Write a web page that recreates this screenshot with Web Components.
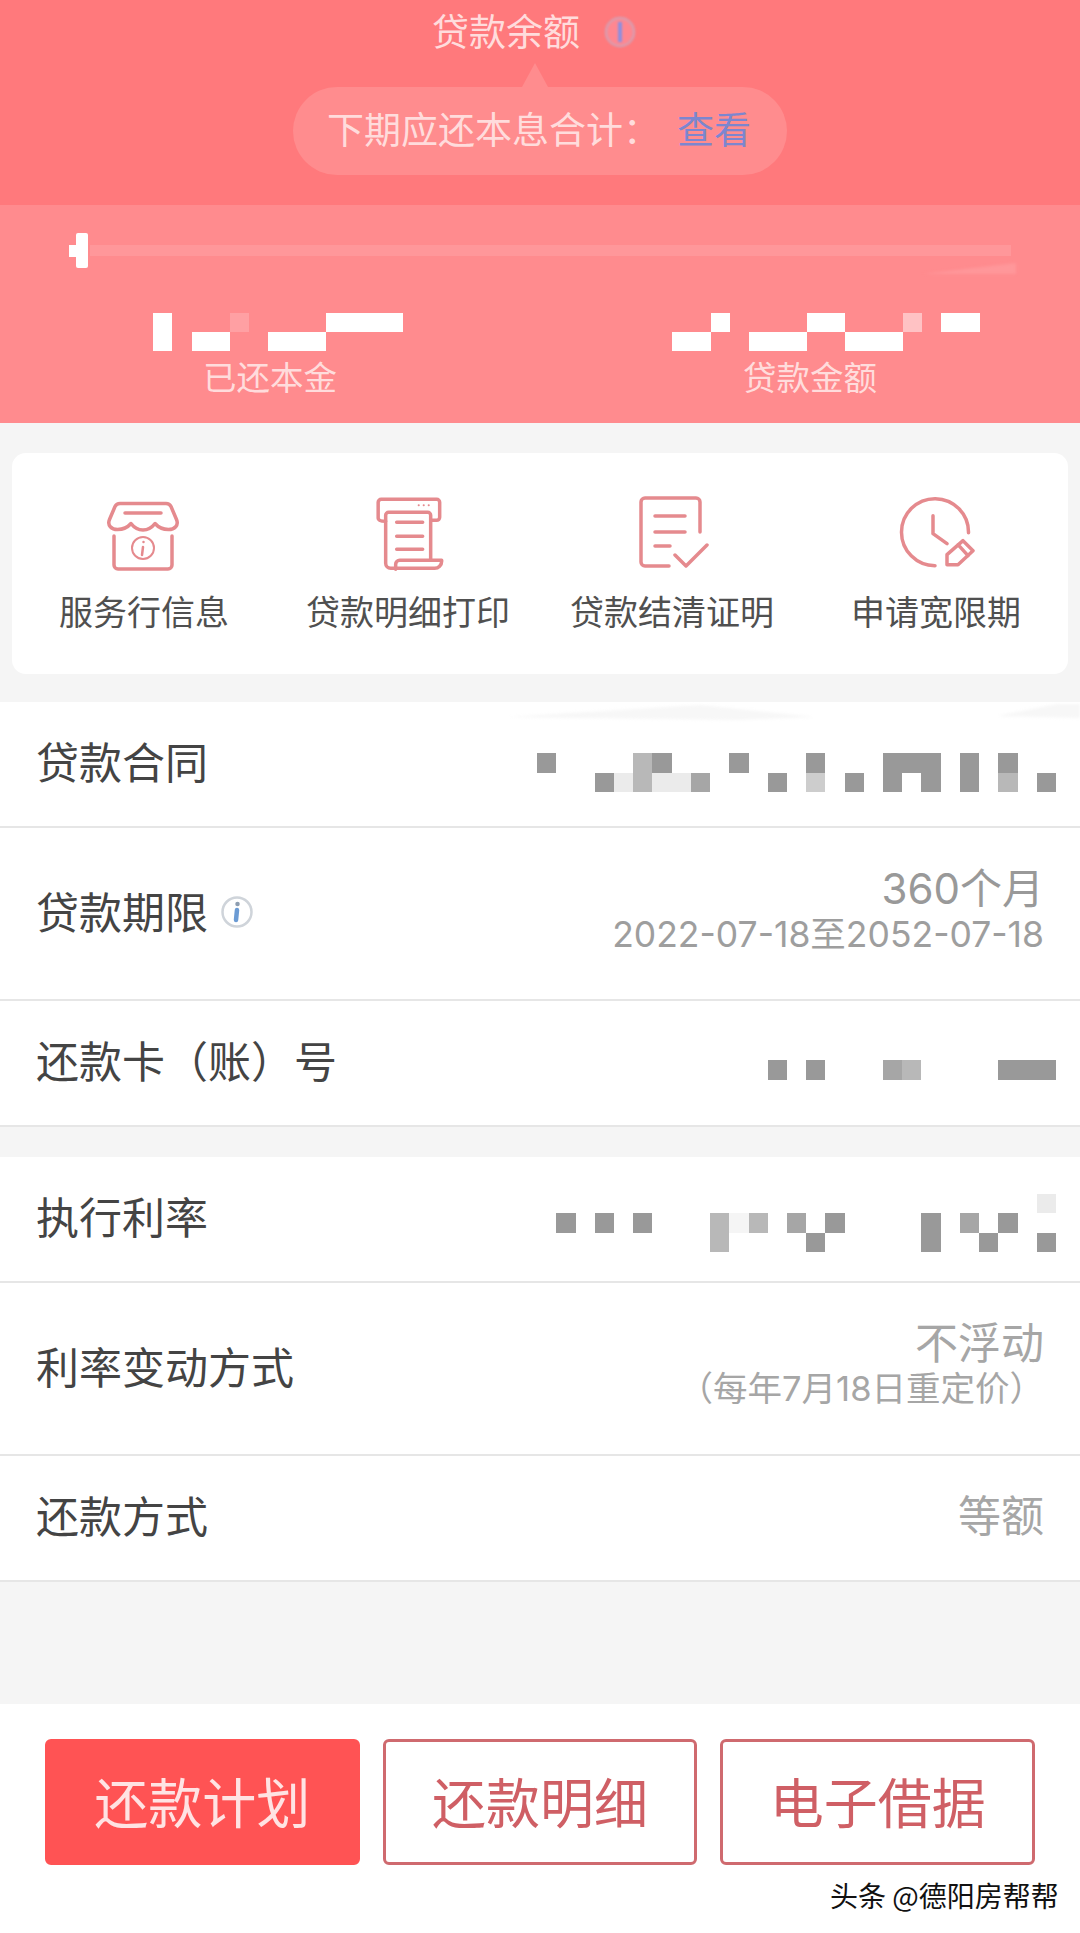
<!DOCTYPE html>
<html lang="zh-CN"><head><meta charset="utf-8"><title>贷款详情</title>
<style>
html,body{margin:0;padding:0;background:#f5f5f5}
body{width:1080px;height:1933px;overflow:hidden;font-family:"Noto Sans CJK SC","Noto Sans",sans-serif;color:#444}
.num{font-family:Inter,"Noto Sans CJK SC",sans-serif;display:block;white-space:nowrap}
</style></head><body>
<loan-hero></loan-hero>
<loan-shortcuts>
  <loan-shortcut label="服务行信息" icon="store"></loan-shortcut>
  <loan-shortcut label="贷款明细打印" icon="print"></loan-shortcut>
  <loan-shortcut label="贷款结清证明" icon="doc"></loan-shortcut>
  <loan-shortcut label="申请宽限期" icon="clock"></loan-shortcut>
</loan-shortcuts>
<loan-group>
  <loan-row smudge label="贷款合同"><pixel-block style="margin-top:17px" rows="d....md...d...d...ddd.d.d..|...dwmwwa...d.l.d.d.d.d.m.d"></pixel-block></loan-row>
  <loan-row tall label="贷款期限" info><span class="num" style="font-size:42px;color:#999;line-height:46px">360个月</span><span class="num" style="font-size:35.500px;color:#9e9e9e;line-height:46px;margin-bottom:4px">2022-07-18至2052-07-18</span></loan-row>
  <loan-row label="还款卡（账）号"><pixel-block style="margin-top:14px" rows="............d.d...am....ddd"></pixel-block></loan-row>
</loan-group>
<loan-group style="margin-top:30px">
  <loan-row label="执行利率"><pixel-block style="margin-top:8px" rows="..........................w|.d.d.d...mfm.a.d....d.a.d..|.........m....d.....d..d..d"></pixel-block></loan-row>
  <loan-row tall label="利率变动方式"><span class="num" style="font-size:43px;color:#a6a6a6;line-height:46px">不浮动</span><span class="num" style="font-size:34.500px;color:#a6a6a6;line-height:46px;margin:0 0 6px 0">（每年7月18日重定价）</span></loan-row>
  <loan-row label="还款方式"><span class="num" style="font-size:43px;color:#a6a6a6;margin-bottom:10px">等额</span></loan-row>
</loan-group>
<loan-actions>
  <loan-button primary>还款计划</loan-button>
  <loan-button>还款明细</loan-button>
  <loan-button>电子借据</loan-button>
</loan-actions>
<script>
const colors={d:'#999',a:'#a6a6a6',m:'#b8b8b8',l:'#cdcdcd',w:'#ebebeb',f:'#f5f5f5',W:'#fff',p:'#ffc2c4',q:'#ffa0a3'};
function shadow(el,html){el.attachShadow({mode:'open'}).innerHTML=html;return el.shadowRoot;}
class PixelBlock extends HTMLElement{
  connectedCallback(){
    if(this.shadowRoot)return;
    const rows=this.getAttribute('rows').split('|');
    const n=Math.max(...rows.map(r=>r.length));
    let cells='';
    rows.forEach(r=>{for(let i=0;i<n;i++){const c=r[i]||'.';cells+=`<i style="background:${colors[c]||'transparent'}"></i>`}});
    shadow(this,`<style>:host{display:block}div{display:grid;grid-template-columns:repeat(${n},19.22px);grid-auto-rows:19.2px}i{display:block}</style><div>${cells}</div>`);
  }
}
customElements.define('pixel-block',PixelBlock);
class LoanHero extends HTMLElement{
  connectedCallback(){
    shadow(this,`<style>
:host{display:block;color:#ffdcdc}
.top{height:205px;background:#ff797c;display:flex;flex-direction:column;align-items:center}
.title{display:flex;align-items:center;height:60px;font-size:37px;line-height:60px;gap:23px;margin-left:-11px}
.title svg{display:block;filter:blur(1px);margin-top:4px}
.bubble{position:relative;margin-top:27px;height:88px;width:494px;border-radius:44px;background:#ff8c8e;display:flex;align-items:center;font-size:37px;box-sizing:border-box;padding:0 0 7px 34px}
.bubble::before{content:"";position:absolute;left:229px;top:-24px;border:solid transparent;border-width:0 13px 24px;border-bottom-color:#ff8c8e}
.bubble b{font-weight:400;color:#7c86cf;margin-left:17px}
.lab{white-space:nowrap}
.low{height:218px;background:#ff8b8e;position:relative}
.bar{display:flex;align-items:center;height:35px;padding:28px 0 0 69px}
.notch{width:7px;height:12px;background:#fff}
.thumb{width:12px;height:35px;background:#fff;border-radius:2px}
.track{width:921px;height:11px;background:#ff979a;margin-left:2px;filter:blur(.6px)}
.streak{position:absolute;left:920px;top:55px;filter:blur(1.5px)}
.cols{display:grid;grid-template-columns:1fr 1fr;margin-top:45px}
.col{display:flex;flex-direction:column;align-items:center}
.col div{font-size:33.500px;line-height:40px;margin-top:5px}
</style>
<div class="top"><div class="title"><span>贷款余额</span>
<svg width="34" height="34" viewBox="0 0 34 34"><circle cx="17" cy="17" r="14" fill="#ff8790" stroke="#d99cae" stroke-width="2.500"/><path d="M17 7v20" stroke="#8c8fe0" stroke-width="4"/></svg></div>
<div class="bubble"><span class="lab">下期应还本息合计：</span><b>查看</b></div></div>
<div class="low"><div class="bar"><span class="notch"></span><span class="thumb"></span><span class="track"></span></div>
<svg class="streak" width="100" height="18" viewBox="0 0 100 18"><path d="M3 14L96 3v11H40z" fill="#ff979a"/></svg>
<div class="cols">
<div class="col"><pixel-block style="margin-left:16px" rows="W...q....WWWW|W.WW..WWW...."></pixel-block><div>已还本金</div></div>
<div class="col"><pixel-block style="margin-left:32px" rows="..W....WW...p.WW|WW..WWW..WWW...."></pixel-block><div>贷款金额</div></div>
</div></div>`);
  }
}
customElements.define('loan-hero',LoanHero);
const ICONS={
store:`<g transform="translate(4 7)"><path d="M12 2.500h46c3 0 4 1 5 3l5.500 13c2.500 6-2 10-8 10-5 0-10-2-13.500-6-3 4-7 6.500-12 6.500s-9-2.500-12-6.500c-3.500 4-8.500 6-13.500 6-6 0-10.500-4-8-10L7 5.500c1-2 2-3 5-3z"/><path d="M6 35v29a4 4 0 0 0 4 4h50a4 4 0 0 0 4-4V35M17 12h36"/><circle cx="35" cy="47" r="11" stroke-width="2"/><path d="M35 46l-1 8M35.500 41v.1" stroke-width="2.500"/></g>`,
print:`<g transform="translate(8.670 3.330)"><path d="M1.500 21V5a3 3 0 0 1 3-3H60a3 3 0 0 1 3 3v15a3 3 0 0 1-3 3h-6M1.500 21q0 3 7.500 3"/><path d="M9 66V18a3 3 0 0 1 3-3h39a3 3 0 0 1 3 3v45M9 66a5 5 0 0 0 5 5h44a7 7 0 0 0 7-7v-1H23a4 4 0 0 0-4 4v5"/><path d="M20 25h26M20 39h26M20 52h26"/><path d="M42 8h.1M47 8h.1M52 8h.1" stroke-width="2"/></g>`,
doc:`<g transform="translate(8 2)"><path d="M60 36V6a4 4 0 0 0-4-4H5a4 4 0 0 0-4 4v60a4 4 0 0 0 4 4h24M15 20h30M15 36h30M15 50h15M35 59l11 11 21-21"/></g>`,
clock:`<g transform="translate(4 2.670)"><path d="M68.500 36A33.500 33.500 0 1 0 35 69M33 19v18l14 10M47 68V58l16-14 10 10-15 14zM58 48l10 11"/></g>`};
class LoanShortcut extends HTMLElement{
  connectedCallback(){
    shadow(this,`<style>:host{display:flex;flex-direction:column;align-items:center}
svg{display:block;fill:none;stroke:#e58a8e;stroke-width:3.500;stroke-linecap:round;stroke-linejoin:round;filter:blur(.5px)}
span{font-size:34px;line-height:44px;color:#505050;margin-top:15px;white-space:nowrap}</style>
<svg width="80" height="80" viewBox="0 0 80 80">${ICONS[this.getAttribute('icon')]}</svg><span>${this.getAttribute('label')}</span>`);
  }
}
customElements.define('loan-shortcut',LoanShortcut);
class LoanShortcuts extends HTMLElement{
  connectedCallback(){
    shadow(this,`<style>:host{display:grid;grid-template-columns:repeat(4,1fr);box-sizing:border-box;width:1056px;height:221px;margin:30px 12px 28px;padding-top:41px;background:#fff;border-radius:14px}</style><slot></slot>`);
  }
}
customElements.define('loan-shortcuts',LoanShortcuts);
class LoanGroup extends HTMLElement{
  connectedCallback(){shadow(this,`<style>:host{display:block;background:#fff}</style><slot></slot>`);}
}
customElements.define('loan-group',LoanGroup);
class LoanRow extends HTMLElement{
  connectedCallback(){
    const info=this.hasAttribute('info')?`<svg class="i" width="32" height="32" viewBox="0 0 32 32"><circle cx="16" cy="16" r="14.500" fill="none" stroke="#cfd4da" stroke-width="2.500"/><path d="M16 14l-1 10" stroke="#6b9bd4" stroke-width="4.500" fill="none" stroke-linecap="round"/><path d="M16.500 8v.1" stroke="#8d9db0" stroke-width="4.500" fill="none" stroke-linecap="round"/></svg>`:'';
    const smudge=this.hasAttribute('smudge')?`<svg class="sm" width="1080" height="20" viewBox="0 0 1080 20"><path d="M507 15L700 3l115 12-80 3zM997 14l60-12h23v14z" fill="#f7f7f7"/></svg>`:'';
    shadow(this,`<style>
:host{display:flex;align-items:center;justify-content:space-between;box-sizing:border-box;height:126px;padding:0 36px;border-bottom:2px solid #e6e6e6;background:#fff;position:relative}
:host([tall]){height:173px}
.l{display:flex;align-items:center;gap:13px;font-size:43px;color:#444;white-space:nowrap;margin-bottom:8px}
.i{display:block;margin-top:4px;filter:blur(.4px)}
.sm{position:absolute;left:0;top:0;filter:blur(1.5px)}
.v{display:flex;flex-direction:column;align-items:flex-end;text-align:right;white-space:nowrap}
::slotted(pixel-block){margin-right:-12px}
</style>${smudge}<div class="l"><span>${this.getAttribute('label')}</span>${info}</div><div class="v"><slot></slot></div>`);
  }
}
customElements.define('loan-row',LoanRow);
class LoanActions extends HTMLElement{
  connectedCallback(){
    shadow(this,`<style>
:host{display:grid;grid-template-columns:repeat(3,1fr);column-gap:23px;box-sizing:border-box;position:relative;width:1080px;height:229px;margin-top:122px;padding:35px 45px 68px;background:#fff}
.mark{position:absolute;left:830px;top:172px;font-size:28px;line-height:38px;color:#111;white-space:nowrap;text-shadow:1px 0 1px #fff,-1px 0 1px #fff,0 1px 1px #fff,0 -1px 1px #fff}
</style><slot></slot><div class="mark">头条 @德阳房帮帮</div>`);
  }
}
customElements.define('loan-actions',LoanActions);
class LoanButton extends HTMLElement{
  connectedCallback(){
    shadow(this,`<style>
:host{display:flex;align-items:center;justify-content:center;box-sizing:border-box;border:3px solid #cf6a6f;border-radius:6px;background:#fff;color:#cf5f65;font-size:54px;padding-bottom:4px}
:host([primary]){background:#ff5354;border-color:#ff5354;color:#ffe3e3}
</style><slot></slot>`);
  }
}
customElements.define('loan-button',LoanButton);
</script>
</body></html>
